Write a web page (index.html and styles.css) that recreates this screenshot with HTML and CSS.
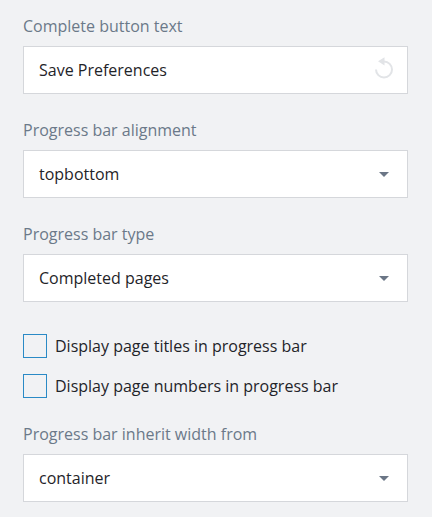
FILE: index.html
```html
<!DOCTYPE html>
<html lang="en">
<head>
<meta charset="utf-8">
<title>Progress bar settings</title>
<link rel="stylesheet" href="styles.css">
</head>
<body>
<main class="panel">
  <div class="field">
    <label class="label">Complete button text</label>
    <div class="control">
      <span class="value">Save Preferences</span>
      <svg class="reset" width="20" height="26" viewBox="0 0 20 26" fill="none" aria-hidden="true">
        <path d="M11 4.5 A8 8 0 1 1 3 12.5" stroke="#e2e4e7" stroke-width="2"/>
        <path d="M11.5 0.2 L11.5 8.4 L5 4.3 Z" fill="#e2e4e7"/>
      </svg>
    </div>
  </div>
  <div class="field">
    <label class="label">Progress bar alignment</label>
    <div class="control"><span class="value">topbottom</span><span class="caret"></span></div>
  </div>
  <div class="field">
    <label class="label">Progress bar type</label>
    <div class="control"><span class="value">Completed pages</span><span class="caret"></span></div>
  </div>
  <div class="checks">
    <label class="check"><span class="box"></span><span>Display page titles in progress bar</span></label>
    <label class="check"><span class="box"></span><span>Display page numbers in progress bar</span></label>
  </div>
  <div class="field">
    <label class="label">Progress bar inherit width from</label>
    <div class="control"><span class="value">container</span><span class="caret"></span></div>
  </div>
</main>
</body>
</html>
```
FILE: styles.css
```css
* { box-sizing: border-box; }
html, body { margin: 0; height: 100%; }
body {
  background: #f1f2f4;
  font-family: "Open Sans", "Noto Sans", sans-serif;
  font-size: 16px;
  overflow: hidden;
}
.panel {
  width: 432px;
  padding: 15px 24px 0 23px;
  display: flex;
  flex-direction: column;
}
.field { margin-bottom: 25px; }
.label {
  display: block;
  height: 22px;
  line-height: 22px;
  margin-bottom: 9px;
  color: #6b7989;
}
.control {
  height: 48px;
  background: #fff;
  border: 1px solid #d5d7db;
  padding: 0 14px 0 15px;
  display: flex;
  align-items: center;
  justify-content: space-between;
  color: #1f2429;
}
.caret {
  width: 0;
  height: 0;
  margin-right: 4px;
  border-left: 5px solid transparent;
  border-right: 5px solid transparent;
  border-top: 5px solid #6b7686;
}
.checks {
  display: flex;
  flex-direction: column;
  gap: 16px;
  margin: 7px 0 25px;
}
.check {
  display: flex;
  align-items: center;
  gap: 8px;
  height: 24px;
  color: #1f2429;
}
.box {
  width: 24px;
  height: 24px;
  border: 1px solid #2a8ac6;
}
```
